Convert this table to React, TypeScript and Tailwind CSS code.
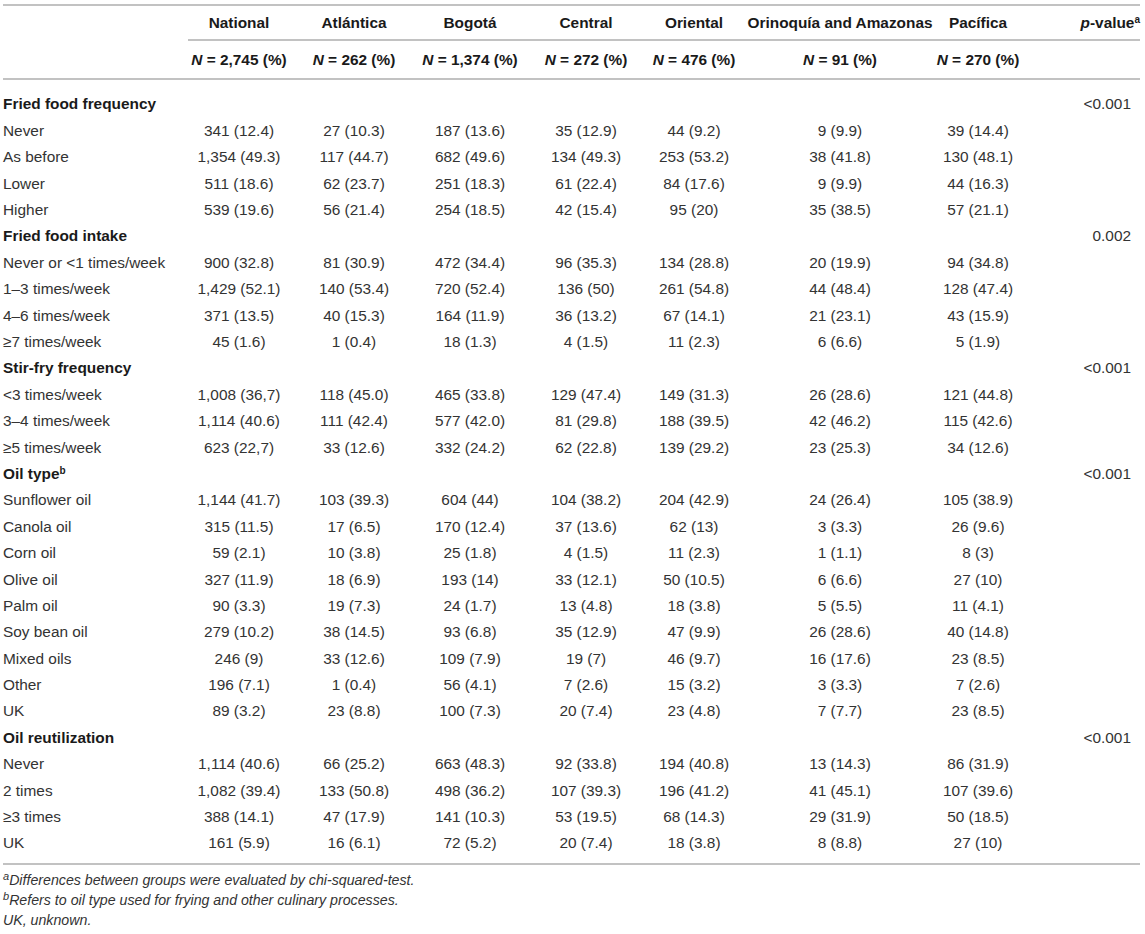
import React from "react";

// column widths follow the printed table (label + 7 regions + p-value)
const GRID =
  "grid grid-cols-[185px_102px_128px_104px_128px_88px_204px_72px_126px]";

type Group = {
  title: string;
  sup?: string;
  p: string;
  rows: [string, string[]][];
};

const REGIONS = [
  ["National", "2,745"],
  ["Atlántica", "262"],
  ["Bogotá", "1,374"],
  ["Central", "272"],
  ["Oriental", "476"],
  ["Orinoquía and Amazonas", "91"],
  ["Pacífica", "270"],
];

const GROUPS: Group[] = [
  {
    title: "Fried food frequency",
    p: "<0.001",
    rows: [
      ["Never", ["341 (12.4)", "27 (10.3)", "187 (13.6)", "35 (12.9)", "44 (9.2)", "9 (9.9)", "39 (14.4)"]],
      ["As before", ["1,354 (49.3)", "117 (44.7)", "682 (49.6)", "134 (49.3)", "253 (53.2)", "38 (41.8)", "130 (48.1)"]],
      ["Lower", ["511 (18.6)", "62 (23.7)", "251 (18.3)", "61 (22.4)", "84 (17.6)", "9 (9.9)", "44 (16.3)"]],
      ["Higher", ["539 (19.6)", "56 (21.4)", "254 (18.5)", "42 (15.4)", "95 (20)", "35 (38.5)", "57 (21.1)"]],
    ],
  },
  {
    title: "Fried food intake",
    p: "0.002",
    rows: [
      ["Never or <1 times/week", ["900 (32.8)", "81 (30.9)", "472 (34.4)", "96 (35.3)", "134 (28.8)", "20 (19.9)", "94 (34.8)"]],
      ["1–3 times/week", ["1,429 (52.1)", "140 (53.4)", "720 (52.4)", "136 (50)", "261 (54.8)", "44 (48.4)", "128 (47.4)"]],
      ["4–6 times/week", ["371 (13.5)", "40 (15.3)", "164 (11.9)", "36 (13.2)", "67 (14.1)", "21 (23.1)", "43 (15.9)"]],
      ["≥7 times/week", ["45 (1.6)", "1 (0.4)", "18 (1.3)", "4 (1.5)", "11 (2.3)", "6 (6.6)", "5 (1.9)"]],
    ],
  },
  {
    title: "Stir-fry frequency",
    p: "<0.001",
    rows: [
      ["<3 times/week", ["1,008 (36,7)", "118 (45.0)", "465 (33.8)", "129 (47.4)", "149 (31.3)", "26 (28.6)", "121 (44.8)"]],
      ["3–4 times/week", ["1,114 (40.6)", "111 (42.4)", "577 (42.0)", "81 (29.8)", "188 (39.5)", "42 (46.2)", "115 (42.6)"]],
      ["≥5 times/week", ["623 (22,7)", "33 (12.6)", "332 (24.2)", "62 (22.8)", "139 (29.2)", "23 (25.3)", "34 (12.6)"]],
    ],
  },
  {
    title: "Oil type",
    sup: "b",
    p: "<0.001",
    rows: [
      ["Sunflower oil", ["1,144 (41.7)", "103 (39.3)", "604 (44)", "104 (38.2)", "204 (42.9)", "24 (26.4)", "105 (38.9)"]],
      ["Canola oil", ["315 (11.5)", "17 (6.5)", "170 (12.4)", "37 (13.6)", "62 (13)", "3 (3.3)", "26 (9.6)"]],
      ["Corn oil", ["59 (2.1)", "10 (3.8)", "25 (1.8)", "4 (1.5)", "11 (2.3)", "1 (1.1)", "8 (3)"]],
      ["Olive oil", ["327 (11.9)", "18 (6.9)", "193 (14)", "33 (12.1)", "50 (10.5)", "6 (6.6)", "27 (10)"]],
      ["Palm oil", ["90 (3.3)", "19 (7.3)", "24 (1.7)", "13 (4.8)", "18 (3.8)", "5 (5.5)", "11 (4.1)"]],
      ["Soy bean oil", ["279 (10.2)", "38 (14.5)", "93 (6.8)", "35 (12.9)", "47 (9.9)", "26 (28.6)", "40 (14.8)"]],
      ["Mixed oils", ["246 (9)", "33 (12.6)", "109 (7.9)", "19 (7)", "46 (9.7)", "16 (17.6)", "23 (8.5)"]],
      ["Other", ["196 (7.1)", "1 (0.4)", "56 (4.1)", "7 (2.6)", "15 (3.2)", "3 (3.3)", "7 (2.6)"]],
      ["UK", ["89 (3.2)", "23 (8.8)", "100 (7.3)", "20 (7.4)", "23 (4.8)", "7 (7.7)", "23 (8.5)"]],
    ],
  },
  {
    title: "Oil reutilization",
    p: "<0.001",
    rows: [
      ["Never", ["1,114 (40.6)", "66 (25.2)", "663 (48.3)", "92 (33.8)", "194 (40.8)", "13 (14.3)", "86 (31.9)"]],
      ["2 times", ["1,082 (39.4)", "133 (50.8)", "498 (36.2)", "107 (39.3)", "196 (41.2)", "41 (45.1)", "107 (39.6)"]],
      ["≥3 times", ["388 (14.1)", "47 (17.9)", "141 (10.3)", "53 (19.5)", "68 (14.3)", "29 (31.9)", "50 (18.5)"]],
      ["UK", ["161 (5.9)", "16 (6.1)", "72 (5.2)", "20 (7.4)", "18 (3.8)", "8 (8.8)", "27 (10)"]],
    ],
  },
];

export default function App() {
  return (
    <div className="w-[1145px] h-[934px] bg-white pt-[4px] pl-[3px] text-[#222] font-['Liberation_Sans',Arial,sans-serif] text-[15.4px] leading-none">
      <div className="w-[1137px] border-t-2 border-[#c2c2c2]">
        {/* region names */}
        <div className={`${GRID} h-[35px]`}>
          <div />
          {REGIONS.map(([name]) => (
            <div
              key={name}
              className="flex items-center justify-center border-b-2 border-[#c2c2c2] font-bold text-[#1a1a1a] whitespace-nowrap"
            >
              {name}
            </div>
          ))}
          <div className="flex items-center justify-end border-b-2 border-[#c2c2c2] font-bold text-[#1a1a1a] whitespace-nowrap">
            <span>
              <i>p</i>-value<sup className="text-[10px] font-bold">a</sup>
            </span>
          </div>
        </div>

        {/* sample sizes */}
        <div className={`${GRID} h-[39px] border-b-2 border-[#c2c2c2] font-bold text-[#1a1a1a]`}>
          <div />
          {REGIONS.map(([name, n]) => (
            <div key={name} className="flex items-center justify-center whitespace-nowrap">
              <span>
                <i>N</i> = {n} (%)
              </span>
            </div>
          ))}
          <div />
        </div>

        {/* body */}
        <div className="pt-[11px] pb-[7px] border-b-2 border-[#c2c2c2]">
          {GROUPS.map((g) => (
            <React.Fragment key={g.title}>
              <div className={`${GRID} h-[26.4px] items-center`}>
                <div className="font-bold text-[#1a1a1a] whitespace-nowrap">
                  {g.title}
                  {g.sup && <sup className="text-[10px]">{g.sup}</sup>}
                </div>
                {REGIONS.map(([name]) => (
                  <div key={name} />
                ))}
                <div className="text-right pr-[9px] text-[#333]">{g.p}</div>
              </div>
              {g.rows.map(([label, vals], i) => (
                <div key={label + i} className={`${GRID} h-[26.4px] items-center text-[#333]`}>
                  <div className="whitespace-nowrap">{label}</div>
                  {vals.map((v, j) => (
                    <div key={j} className="text-center whitespace-nowrap">
                      {v}
                    </div>
                  ))}
                  <div />
                </div>
              ))}
            </React.Fragment>
          ))}
        </div>

        {/* footnotes */}
        <div className="mt-[5px] italic text-[14.2px] leading-[20px] text-[#333]">
          <p>
            <sup className="text-[11px]">a</sup>Differences between groups were evaluated by chi-squared-test.
          </p>
          <p>
            <sup className="text-[11px]">b</sup>Refers to oil type used for frying and other culinary processes.
          </p>
          <p>UK, unknown.</p>
        </div>
      </div>
    </div>
  );
}
